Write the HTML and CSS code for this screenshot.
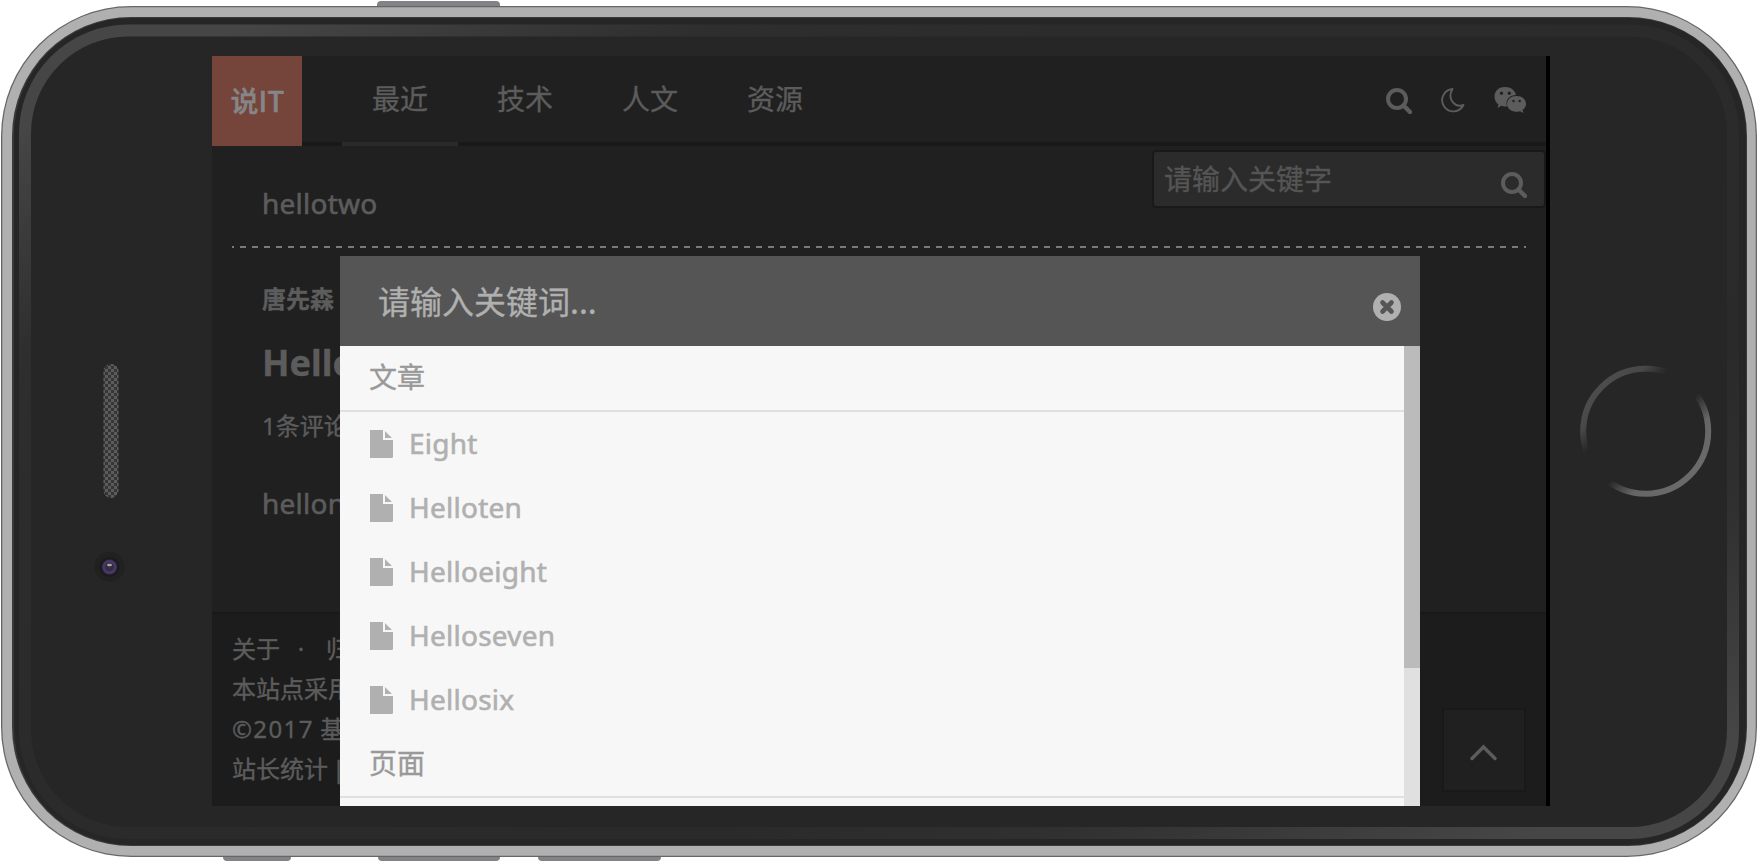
FILE: index.html
```html
<!DOCTYPE html>
<html lang="zh-CN">
<head>
<meta charset="utf-8">
<title>说IT</title>
<link rel="stylesheet" href="styles.css">
</head>
<body>
<svg width="0" height="0" class="defs">
  <symbol id="search" viewBox="0 0 26 26"><circle cx="11" cy="11" r="9" fill="none" stroke="currentColor" stroke-width="4"/><path d="M17.500 17.500L24 24" stroke="currentColor" stroke-width="4.400" stroke-linecap="round"/></symbol>
  <symbol id="file" viewBox="0 0 23 28"><path d="M0 0H13V10H23V26.500Q23 28 21.500 28H0ZM15 1L22 8H15Z" fill="currentColor"/></symbol>
</svg>
<div class="device">
  <svg class="chrome" viewBox="0 0 1758 862">
    <defs>
      <linearGradient id="ring" x1="0" y1="0" x2="1" y2="1">
        <stop offset=".06" stop-color="#464646"/><stop offset=".2" stop-color="#2e2e2e"/><stop offset=".3" stop-color="#2c2c2c"/>
        <stop offset=".7" stop-color="#2a2a2a"/><stop offset=".8" stop-color="#303030"/><stop offset=".94" stop-color="#464646"/>
      </linearGradient>
      <linearGradient id="home" gradientUnits="userSpaceOnUse" x1="1601.500" y1="387" x2="1689.900" y2="475.500">
        <stop offset="0" stop-color="#4c4c4c"/><stop offset=".13" stop-color="#484848"/><stop offset=".28" stop-color="#262626"/>
        <stop offset=".58" stop-color="#262626"/><stop offset=".78" stop-color="#666"/><stop offset="1" stop-color="#6a6a6a"/>
      </linearGradient>
      <radialGradient id="lens"><stop offset="0" stop-color="#3a3445"/><stop offset=".4" stop-color="#30293c"/><stop offset=".75" stop-color="#4c3b68"/><stop offset="1" stop-color="#3c2d55"/></radialGradient>
      <pattern id="mesh" width="6" height="6" patternUnits="userSpaceOnUse"><path d="M0 0H3V3H0ZM3 3H6V6H3Z" fill="#5c5c5c"/></pattern>
    </defs>
    <g fill="#828287">
      <rect x="377" y="1" width="123" height="12" rx="4"/><rect x="223" y="849" width="68" height="12" rx="4"/>
      <rect x="378" y="849" width="122" height="12" rx="4"/><rect x="538" y="849" width="123" height="12" rx="4"/>
    </g>
    <rect x="1" y="6" width="1756" height="851" rx="130" fill="#666"/>
    <rect x="2.300" y="7.300" width="1753.400" height="848.400" rx="128.500" fill="#b0b0b0"/>
    <rect x="12" y="17" width="1735" height="829" rx="119" fill="#3a3a3a"/>
    <rect x="14" y="18" width="1732" height="827" rx="117" fill="#262626"/>
    <rect x="25" y="30.500" width="1708" height="802.500" rx="103" fill="none" stroke="url(#ring)" stroke-width="12"/>
    <rect x="103.500" y="364" width="15" height="134" rx="7.500" fill="#363636"/>
    <rect x="103.500" y="364" width="15" height="134" rx="7.500" fill="url(#mesh)"/>
    <circle cx="109.500" cy="567" r="15" fill="#212121"/><circle cx="109.500" cy="567" r="10" fill="#1b1b1f"/>
    <circle cx="109.500" cy="567" r="7.500" fill="url(#lens)"/><ellipse cx="109.500" cy="565" rx="2.500" ry="1.300" fill="#aaa6b0"/>
    <circle cx="1645.700" cy="431.300" r="62.500" fill="none" stroke="url(#home)" stroke-width="6"/>
  </svg>

  <main class="screen">
    <header class="topbar">
      <a class="logo">说IT</a>
      <nav class="nav"><a class="active">最近</a><a>技术</a><a>人文</a><a>资源</a></nav>
      <div class="tools">
        <svg class="i-search"><use href="#search"/></svg>
        <svg class="i-moon" viewBox="0 0 24 25"><path d="M11.500 1A11.200 11.200 0 1 0 22.500 17C14 20 5.500 11 11.500 1Z" fill="none" stroke="currentColor" stroke-width="1.900" stroke-linejoin="round"/></svg>
        <svg class="i-wechat" viewBox="0 0 32 26"><path d="M11 0C17 0 21 3.500 22 8C16 8 12 12 12.500 17.500Q13 18.500 13 19.200Q10 19.700 7.500 18.800L3.500 21L4.500 17.500C-2 13-1 0 11 0Z" fill="currentColor"/><path d="M22.500 9C28 9 32 12.500 32 17C32 19.500 30.500 21.700 28.500 23L29.500 26L26 24.200C18 26.500 13 21.500 13 17C13 12.500 17 9 22.500 9Z" fill="currentColor"/><g fill="#202020"><circle cx="7.500" cy="6.200" r="1.600"/><circle cx="15.300" cy="6.200" r="1.600"/><circle cx="19.500" cy="14" r="1.200"/><circle cx="25.700" cy="14" r="1.200"/></g></svg>
      </div>
    </header>
    <div class="dropdown"><span>请输入关键字</span><svg class="i-search"><use href="#search"/></svg></div>
    <section class="posts">
      <p class="excerpt">hellotwo</p>
      <div class="divider"></div>
      <p class="author">唐先森</p>
      <h2 class="title">Hello</h2>
      <p class="meta">1条评论</p>
      <p class="excerpt second">hellon</p>
    </section>
    <footer class="footer">
      <p>关于<span class="dot">·</span>归</p>
      <p>本站点采用</p>
      <p><span class="year">©2017</span> 基</p>
      <p>站长统计<span class="bar">|</span></p>
    </footer>
    <a class="to-top"><svg viewBox="0 0 27 17"><path d="M2 14.500L13.500 3L25 14.500" fill="none" stroke="currentColor" stroke-width="3.400" stroke-linecap="round"/></svg></a>
    <div class="modal">
      <div class="modal-head"><span>请输入关键词...</span>
        <svg class="close" viewBox="0 0 28 28"><circle cx="14" cy="14" r="14" fill="#b0b0b0"/><path d="M9.500 9.500L18.500 18.500M18.500 9.500L9.500 18.500" stroke="#555" stroke-width="4.600" stroke-linecap="round"/></svg>
      </div>
      <div class="results">
        <div class="list">
          <h3>文章</h3>
          <a><svg><use href="#file"/></svg><span>Eight</span></a>
          <a><svg><use href="#file"/></svg><span>Helloten</span></a>
          <a><svg><use href="#file"/></svg><span>Helloeight</span></a>
          <a><svg><use href="#file"/></svg><span>Helloseven</span></a>
          <a><svg><use href="#file"/></svg><span>Hellosix</span></a>
          <h3>页面</h3>
        </div>
        <div class="track"><div class="thumb"></div></div>
      </div>
    </div>
  </main>
</div>
</body>
</html>
```
FILE: styles.css
```css
* { box-sizing: border-box; margin: 0; padding: 0; }
body { background: #fff; overflow: hidden; font-family: "Noto Sans", "Noto Sans CJK SC", sans-serif; color: #5c5c5c; -webkit-text-stroke: .35px currentColor; }
.defs { position: absolute; }
.device { position: relative; width: 1758px; height: 862px; padding: 56px 208px 56px 212px; }
.chrome { position: absolute; inset: 0; width: 1758px; height: 862px; }
.screen { position: relative; width: 1338px; height: 750px; overflow: hidden; background: #202020; border-right: 4px solid #000; display: flex; flex-direction: column; }

.topbar { height: 90px; flex: none; display: flex; border-bottom: 4px solid #191919; }
.logo { width: 90px; height: 90px; background: #75443b; color: #868686; font: 500 28px/88px "Noto Sans CJK SC", sans-serif; text-align: center; padding-left: 1px; -webkit-text-stroke-width: .5px; }
.nav { display: flex; gap: 9px; margin-left: 40px; height: 90px; }
.nav a { padding: 0 30px; font: 28px/84px "Noto Sans CJK SC", sans-serif; border-bottom: 4px solid transparent; }
.nav .active { border-color: #2a2a2a; }
.tools { margin-left: auto; display: flex; align-items: flex-start; padding: 32px 20px 0 0; }
.i-search { width: 26px; height: 26px; }
.i-moon { width: 24px; height: 25px; margin: 0 29px; }
.i-wechat { width: 32px; height: 26px; margin-top: -1px; }

.dropdown { position: absolute; right: 0; top: 94px; width: 394px; height: 58px; padding: 0 17px 0 10px; display: flex; justify-content: space-between; background: #2b2b2b; border: 2px solid #191919; border-radius: 4px; font: 28px/52px "Noto Sans CJK SC", sans-serif; color: #555; }
.dropdown .i-search { margin-top: 20px; color: #5c5c5c; }

.posts { height: 466px; padding: 37px 20px 0; }
.posts p, .title { padding-left: 30px; white-space: nowrap; }
.excerpt { font-size: 28px; line-height: 40px; height: 63px; letter-spacing: .25px; -webkit-text-stroke-width: .6px; }
.divider { height: 2px; background: repeating-linear-gradient(90deg, #7a7a7a 0 6px, transparent 6px 12px) -4px 0 / 1308px 2px; }
.posts .author { font: 700 24px/40px "Noto Sans CJK SC", sans-serif; margin-top: 30px; }
.title { font-size: 36px; line-height: 50px; margin-top: 20px; }
.meta { font-size: 24px; line-height: 40px; margin-top: 18px; }
.second { margin-top: 37px; }

.footer { flex: 1; background: #1c1c1c; border-top: 2px solid #191919; padding: 15px 20px; font-size: 24px; line-height: 40px; white-space: nowrap; }
.dot { display: inline-block; width: 46px; padding-right: 4px; text-align: center; }
.year { letter-spacing: 1.4px; }
.bar { margin-left: 4px; }
.to-top { position: absolute; left: 1230px; top: 652px; width: 84px; height: 84px; background: #202020; border: 2px solid #191919; display: flex; justify-content: center; padding: 34px 1px 0 0; }
.to-top svg { width: 27px; height: 17px; }

.modal { position: absolute; left: 128px; top: 200px; width: 1080px; height: 550px; display: flex; flex-direction: column; }
.modal-head { height: 90px; background: #555; color: #b0b0b0; display: flex; justify-content: space-between; padding: 0 19px 0 38px; font: 32px/89px "Noto Sans CJK SC", sans-serif; }
.close { width: 28px; height: 28px; margin-top: 36.500px; }
.results { flex: 1; display: flex; overflow: hidden; background: #f7f7f7; }
.list { flex: 1; }
.list h3 { height: 66px; padding-left: 29px; border-bottom: 2px solid #e0e0e0; font: 28px/60px "Noto Sans CJK SC", sans-serif; color: #999; }
.list a { height: 64px; display: flex; align-items: center; padding-left: 30px; font-size: 28px; color: #b0b0b0; letter-spacing: .25px; -webkit-text-stroke-width: .6px; }
.list a span { padding-bottom: 2px; }
.list svg { width: 23px; height: 28px; margin-right: 16px; }
.track { width: 16px; background: #e0e0e0; }
.thumb { height: 322px; background: #bbb; }
```
